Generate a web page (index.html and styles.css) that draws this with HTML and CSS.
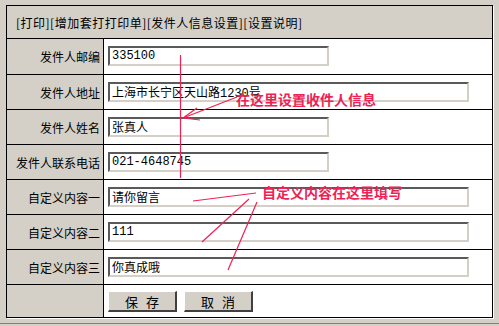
FILE: index.html
```html
<!DOCTYPE html>
<html lang="zh-CN">
<head>
<meta charset="UTF-8">
<title>发件人信息设置</title>
<link rel="stylesheet" href="styles.css">
</head>
<body>

<div class="page">
<div class="grid">
<div class="head">[打印][增加套打打印单][发件人信息设置][设置说明]</div>

<div class="label">发件人邮编</div>
<div class="field"><input class="box short" type="text" value="335100"></div>

<div class="label">发件人地址</div>
<div class="field"><input class="box long" type="text" value="上海市长宁区天山路1230号"></div>

<div class="label">发件人姓名</div>
<div class="field"><input class="box short" type="text" value="张真人"></div>

<div class="label">发件人联系电话</div>
<div class="field"><input class="box short" type="text" value="021-4648745"></div>

<div class="label">自定义内容一</div>
<div class="field"><input class="box long" type="text" value="请你留言"></div>

<div class="label">自定义内容二</div>
<div class="field"><input class="box long" type="text" value="111"></div>

<div class="label">自定义内容三</div>
<div class="field"><input class="box long" type="text" value="你真成哦"></div>

<div class="label"></div>
<div class="field buttons">
<button class="btn">保存</button>
<button class="btn">取消</button>
</div>
</div>

<svg class="notes" width="499" height="326" viewBox="0 0 499 326">
<g stroke="#ee2255" stroke-width="1.2" fill="none">
<line x1="180.5" y1="55" x2="180.5" y2="178"/>
<line x1="183" y1="118" x2="237" y2="97"/>
<line x1="183" y1="118" x2="197" y2="108"/>
<line x1="183" y1="118" x2="200" y2="120"/>
<line x1="193" y1="201" x2="256" y2="193"/>
<line x1="249" y1="199" x2="202" y2="242"/>
<line x1="257" y1="202" x2="228" y2="270"/>
</g>
<text class="note" x="236" y="105">在这里设置收件人信息</text>
<text class="note" x="262" y="198">自定义内容在这里填写</text>
</svg>
</div>

</body>
</html>
```

FILE: styles.css
```css
body {
    margin: 0;
    background-color: #d4d0c8;
    font-family: "Noto Sans CJK SC", "DejaVu Sans", sans-serif;
    font-size: 12px;
    color: #000;
}

.page {
    position: relative;
    width: 499px;
    height: 324px;
    box-sizing: border-box;
    padding: 5px 0 0 6px;
    border-bottom: 1px solid #808080;
    overflow: hidden;
}

.grid {
    display: grid;
    grid-template-columns: 96px 388px;
    grid-template-rows: 32px 35px 34px 34px 34px 34px 34px 34px 32px;
    gap: 1px;
    padding: 1px;
    width: 487px;
    box-sizing: border-box;
    background-color: #000;
    box-shadow: 1px 1px 0 #fff;
}

.head {
    grid-column: 1 / -1;
    background-color: #d4d0c8;
    padding-left: 9px;
    display: flex;
    align-items: center;
    letter-spacing: 0.5px;
}

.label {
    background-color: #d4d0c8;
    display: flex;
    align-items: center;
    justify-content: flex-end;
    padding-right: 3px;
}

.field {
    background-color: #fff;
    padding: 7px 0 0 4px;
}

.box {
    display: block;
    height: 20px;
    box-sizing: border-box;
    margin: 0;
    padding: 0 2px;
    border-style: solid;
    border-width: 2px;
    border-color: #5a5a5a #d4d0c8 #d4d0c8 #5a5a5a;
    background-color: #fff;
    font-family: "Liberation Mono", "Noto Sans CJK SC", monospace;
    font-size: 12px;
    color: #000;
    outline: none;
}

.short {
    width: 221px;
}

.long {
    width: 361px;
}

.buttons {
    display: flex;
    gap: 7px;
    padding-top: 6px;
}

.btn {
    width: 69px;
    height: 21px;
    box-sizing: border-box;
    padding: 0 0 0 8px;
    border-style: solid;
    border-width: 1px 2px 2px 1px;
    border-color: #fff #404040 #404040 #fff;
    background-color: #d4d0c8;
    font-family: "Noto Sans CJK SC", sans-serif;
    font-size: 13px;
    line-height: 17px;
    letter-spacing: 8px;
    color: #000;
}

.notes {
    position: absolute;
    top: 0;
    left: 0;
    pointer-events: none;
}

.note {
    fill: #ee2255;
    font-family: "Noto Sans CJK SC", sans-serif;
    font-size: 14px;
    font-weight: bold;
}
```
